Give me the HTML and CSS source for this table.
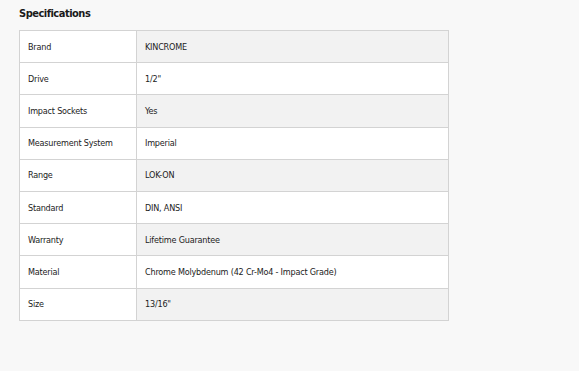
FILE: index.html
```html
<!DOCTYPE html>
<html lang="en">
<head>
<meta charset="utf-8">
<title>Specifications</title>
<link rel="stylesheet" href="styles.css">
</head>
<body>
<section class="specs">
  <h2 class="specs-title">Specifications</h2>
  <table class="specs-table">
    <tbody>
      <tr class="row-shaded"><td class="label">Brand</td><td class="value">KINCROME</td></tr>
      <tr><td class="label">Drive</td><td class="value">1/2"</td></tr>
      <tr class="row-shaded"><td class="label">Impact Sockets</td><td class="value">Yes</td></tr>
      <tr><td class="label">Measurement System</td><td class="value">Imperial</td></tr>
      <tr class="row-shaded"><td class="label">Range</td><td class="value">LOK-ON</td></tr>
      <tr><td class="label">Standard</td><td class="value">DIN, ANSI</td></tr>
      <tr class="row-shaded"><td class="label">Warranty</td><td class="value">Lifetime Guarantee</td></tr>
      <tr><td class="label">Material</td><td class="value">Chrome Molybdenum (42 Cr-Mo4 - Impact Grade)</td></tr>
      <tr class="row-shaded"><td class="label">Size</td><td class="value">13/16"</td></tr>
    </tbody>
  </table>
</section>
</body>
</html>
```

FILE: styles.css
```css
html, body {
  margin: 0;
  padding: 0;
  background: #f8f8f8;
  color: #222222;
  font-family: "DejaVu Sans Condensed", "Liberation Sans", sans-serif;
}

.specs {
  padding: 6px 0 0 19px;
}

.specs-title {
  margin: 0 0 8px 0;
  font-size: 11px;
  line-height: 16px;
  font-weight: bold;
  color: #1a1a1a;
  letter-spacing: -0.5px;
}

.specs-table {
  width: 430px;
  border-collapse: collapse;
  font-size: 9px;
  letter-spacing: -0.2px;
}

.specs-table td {
  height: 32.2px;
  padding: 0 7px 0 8px;
  border: 1px solid #d3d3d3;
  vertical-align: middle;
  background: #ffffff;
  box-sizing: border-box;
}

.specs-table .label {
  width: 117px;
}

.specs-table .row-shaded .value {
  background: #f2f2f2;
}
```
